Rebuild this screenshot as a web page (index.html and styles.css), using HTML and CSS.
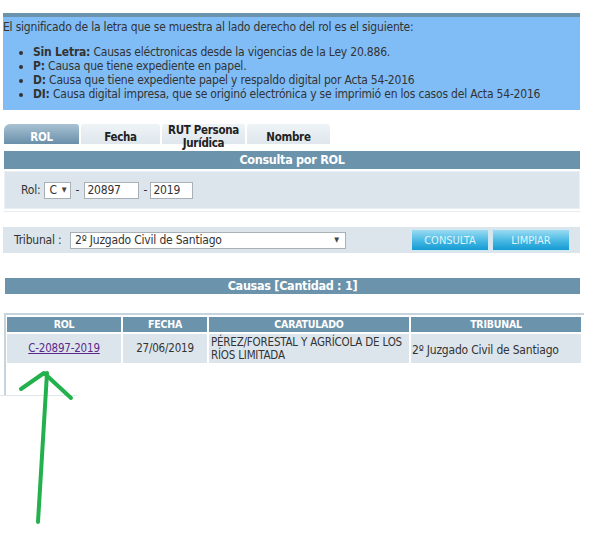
FILE: index.html
```
<!DOCTYPE html>
<html lang="es">
<head>
<meta charset="utf-8">
<title>Consulta de causas</title>
<link rel="stylesheet" href="styles.css">
</head>
<body>
<div class="page">
  <div class="info">
    <div class="info-band"></div>
    <div class="info-body">
      <p class="info-intro">El significado de la letra que se muestra al lado derecho del rol es el siguiente:</p>
      <ul class="info-list">
        <li><b>Sin Letra:</b> Causas eléctronicas desde la vigencias de la Ley 20.886.</li>
        <li><b>P:</b> Causa que tiene expediente en papel.</li>
        <li><b>D:</b> Causa que tiene expediente papel y respaldo digital por Acta 54-2016</li>
        <li><b>DI:</b> Causa digital impresa, que se originó electrónica y se imprimió en los casos del Acta 54-2016</li>
      </ul>
    </div>
  </div>

  <div class="tabs">
    <div class="tab tab-active tab-rol">ROL</div>
    <div class="tab tab-fecha">Fecha</div>
    <div class="tab tab-rut">RUT Persona<br>Jurídica</div>
    <div class="tab tab-nombre">Nombre</div>
  </div>

  <div class="bar bar-consulta">Consulta por ROL</div>
  <div class="form-wrap">
    <div class="form-box">
      <span class="lbl">Rol:</span>
      <span class="sel sel-small">C <span class="arrow">▼</span></span>
      <span class="dash">-</span>
      <span class="inp inp-num">20897</span>
      <span class="dash">-</span>
      <span class="inp inp-year">2019</span>
    </div>
  </div>

  <div class="trib-row">
    <span class="lbl lbl-trib">Tribunal :</span>
    <span class="sel sel-trib">2º Juzgado Civil de Santiago<span class="arrow">▼</span></span>
    <span class="btn btn-consulta">CONSULTA</span>
    <span class="btn btn-limpiar">LIMPIAR</span>
  </div>

  <div class="bar bar-causas">Causas [Cantidad : 1]</div>

  <div class="table-wrap">
    <table class="results">
      <thead>
        <tr>
          <th class="c-rol">ROL</th>
          <th class="c-fecha">FECHA</th>
          <th class="c-carat">CARATULADO</th>
          <th class="c-trib">TRIBUNAL</th>
        </tr>
      </thead>
      <tbody>
        <tr>
          <td class="c-rol center"><a href="#" class="rol-link">C-20897-2019 </a></td>
          <td class="c-fecha center">27/06/2019</td>
          <td class="c-carat">PÉREZ/FORESTAL Y AGRÍCOLA DE LOS RÍOS LIMITADA</td>
          <td class="c-trib trib-cell">2º Juzgado Civil de Santiago</td>
        </tr>
      </tbody>
    </table>
  </div>
  <div class="crop-edge"></div>

  <svg class="annot" width="90" height="170" viewBox="0 0 90 170">
    <g fill="none" stroke="#22b14c" stroke-width="4" stroke-linecap="round" stroke-linejoin="round">
      <path d="M38 152 L47 3"/>
      <path d="M21 19 L44 3 L71 28"/>
    </g>
  </svg>
</div>
</body>
</html>
```
FILE: styles.css
```
* { box-sizing: border-box; }
html, body { margin: 0; padding: 0; background: #fff; }
body {
  font-family: "DejaVu Sans Condensed", "DejaVu Sans", sans-serif;
  font-size: 12px;
  letter-spacing: -0.2px;
  color: #333;
}
.page { position: relative; width: 600px; height: 541px; overflow: hidden; }

.info { margin: 13px 0 0 3px; width: 577px; }
.info-band { height: 4px; background: #6b93ab; }
.info-body { background: #80bdf6; padding: 3px 0 9px 0; }
.info-intro { margin: 0; line-height: 14px; }
.info-list { margin: 11px 0 0 0; padding-left: 30px; line-height: 14px; }
.info-list b { font-weight: bold; }

.tabs { display: flex; gap: 2px; margin: 14px 0 0 4px; height: 20px; }
.tab {
  height: 20px;
  background: linear-gradient(#eef3f6, #dfe7ed);
  color: #222;
  font-weight: bold;
  font-size: 11.5px;
  letter-spacing: -0.3px;
  text-align: center;
  line-height: 12px;
  padding-top: 7px;
  border-radius: 3px 3px 0 0;
}
.tab-active {
  background: linear-gradient(#a9c2d3, #6990aa);
  color: #fff;
  border-radius: 6px 3px 0 0;
}
.tab-rol { width: 75px; }
.tab-fecha { width: 79px; }
.tab-rut { width: 83px; padding-top: 0; line-height: 13px; }
.tab-nombre { width: 83px; }

.bar {
  background: #6b93ab;
  color: #fff;
  font-weight: bold;
  font-size: 12.5px;
  letter-spacing: -0.3px;
  text-align: center;
}
.bar-consulta { margin: 7px 0 0 4px; width: 576px; height: 18px; line-height: 18px; }

.form-wrap { margin: 2px 0 0 4px; width: 576px; border-bottom: 1px solid #e6ecf1; padding-bottom: 2px; }
.form-box {
  height: 38px;
  background: #dde5ec;
  border: 1px solid #eaf0f4;
  display: flex;
  align-items: center;
  padding-left: 16px;
}
.lbl { font-size: 12px; }
.sel, .inp {
  height: 17px;
  background: #fff;
  border: 1px solid #a9b1b8;
  display: inline-flex;
  align-items: center;
  font-size: 12px;
  padding-left: 2px;
}
.sel-small { width: 27px; margin-left: 4px; padding-left: 4px; }
.arrow { font-size: 7px; margin-left: 5px; color: #444; }
.dash { width: 12px; text-align: center; }
.inp-num { width: 55px; margin-left: 1px; }
.inp-year { width: 43px; margin-left: -1px; }

.trib-row {
  margin: 15px 0 0 3px;
  width: 577px;
  height: 26px;
  background: #dde5ec;
  display: flex;
  align-items: center;
  padding-left: 11px;
}
.lbl-trib { width: 56px; }
.sel-trib {
  width: 276px;
  margin-left: 0;
  padding-left: 4px;
  justify-content: space-between;
  padding-right: 6px;
}
.sel-trib .arrow { margin-left: 0; }
.btn {
  height: 22px;
  width: 78px;
  display: inline-flex;
  align-items: center;
  justify-content: center;
  background: linear-gradient(#9adcf3, #46b7e3 55%, #139bd3);
  border: 1px solid #cfe8f3;
  color: #dff4fc;
  font-size: 11px;
  letter-spacing: 0;
}
.btn-consulta { margin-left: 65px; }
.btn-limpiar { margin-left: 3px; }

.bar-causas { margin: 25px 0 0 5px; width: 575px; height: 16px; line-height: 16px; }

.table-wrap {
  margin: 19px 0 0 4px;
  width: 580px;
  height: 82px;
  border-left: 2px solid #c6d4de;
  border-top: 2px solid #c6d4de;
}
.results {
  border-collapse: separate;
  border-spacing: 2px;
  margin-top: 0;
  margin-left: -1px;
}
.results th {
  background: #6b93ab;
  color: #fff;
  font-weight: bold;
  font-size: 10.5px;
  letter-spacing: -0.2px;
  height: 15px;
  padding: 0;
  line-height: 15px;
}
.results td {
  background: #dde5ec;
  height: 29px;
  padding: 0 2px;
  font-size: 11.5px;
  line-height: 13px;
  vertical-align: middle;
}
.c-rol { width: 114px; }
.c-fecha { width: 84px; }
.c-carat { width: 200px; }
.c-trib { width: 170px; }
.center { text-align: center; }
.rol-link { color: #5b2a8c; text-decoration: underline; }
.results td.trib-cell { padding-top: 4px; padding-left: 1px; font-size: 12px; }

.crop-edge { width: 77px; height: 1px; background: #dfe6ec; margin-top: 0; }

.annot { position: absolute; left: 0; top: 370px; }
```
